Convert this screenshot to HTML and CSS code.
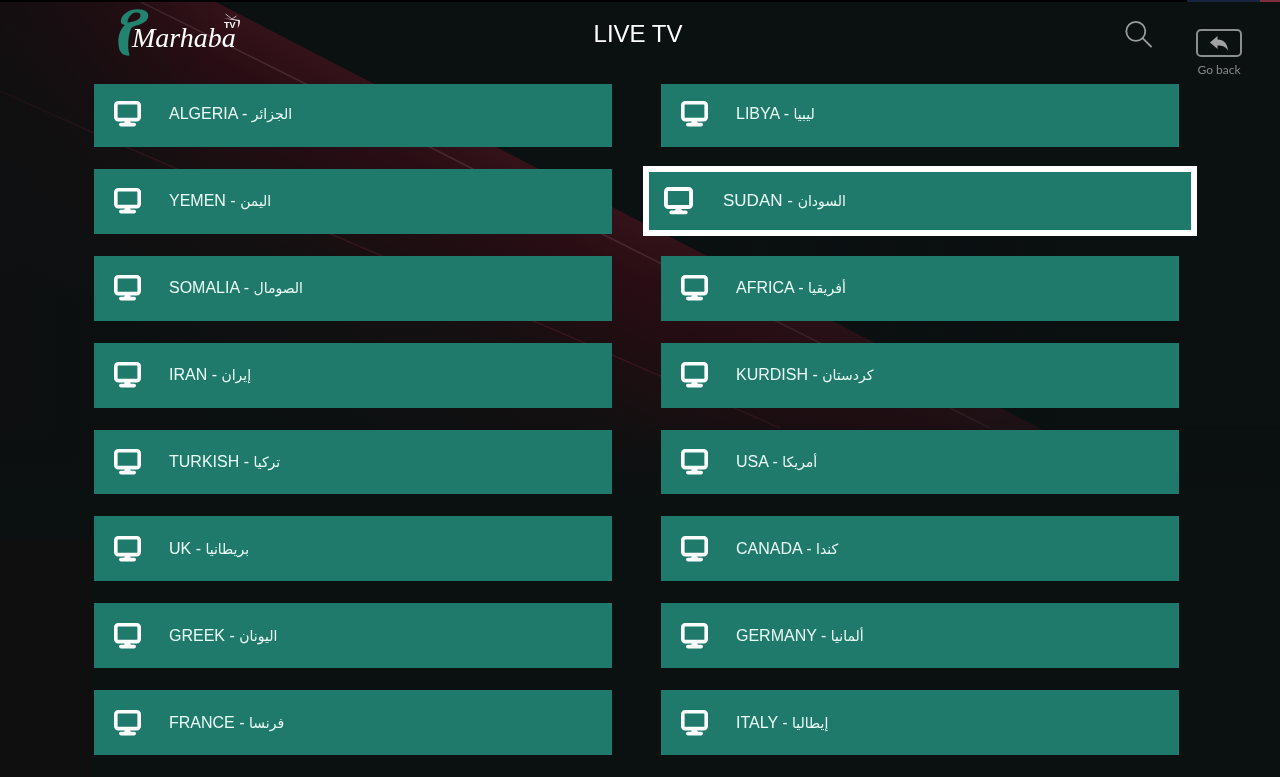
FILE: index.html
```html
<!DOCTYPE html>
<html lang="en">
<head>
    <meta charset="UTF-8">
    <meta name="viewport" content="width=device-width, initial-scale=1.0">
    <title>Marhaba TV - Live TV</title>
    <link rel="stylesheet" href="styles.css">
</head>
<body>

    <!-- Background artwork -->
    <svg class="backdrop" viewBox="0 0 1280 777" preserveAspectRatio="xMinYMin slice" aria-hidden="true">
        <defs>
            <linearGradient id="band" gradientUnits="userSpaceOnUse" x1="440" y1="119" x2="285" y2="419">
                <stop offset="0" stop-color="#341219"/>
                <stop offset="0.15" stop-color="#2a0d14"/>
                <stop offset="0.3" stop-color="#210d12"/>
                <stop offset="0.55" stop-color="#141011"/>
                <stop offset="1" stop-color="#0b1011"/>
            </linearGradient>
            <linearGradient id="fade" gradientUnits="userSpaceOnUse" x1="640" y1="0" x2="1060" y2="0">
                <stop offset="0" stop-color="#0b1011" stop-opacity="0"/>
                <stop offset="1" stop-color="#0b1011" stop-opacity="0.6"/>
            </linearGradient>
            <linearGradient id="fadeLeft" gradientUnits="userSpaceOnUse" x1="0" y1="0" x2="220" y2="0">
                <stop offset="0" stop-color="#0e0f10" stop-opacity="0.7"/>
                <stop offset="1" stop-color="#0e0f10" stop-opacity="0"/>
            </linearGradient>
            <linearGradient id="fadeDown" gradientUnits="userSpaceOnUse" x1="0" y1="420" x2="0" y2="495">
                <stop offset="0" stop-color="#0b1011" stop-opacity="0"/>
                <stop offset="1" stop-color="#0b1011"/>
            </linearGradient>
        </defs>
        <path d="M0 0H212L1080 449V777H0Z" fill="url(#band)"/>
        <path d="M141 2L304 83L471 168L640 253L818 342L990 428" class="ray ray-bright"/>
        <path d="M0 91L94 133L175 168L380 255L580 341L780 428" class="ray"/>
        <path d="M640 200H1280V777H640Z" fill="url(#fade)"/>
        <path d="M0 0H220V777H0Z" fill="url(#fadeLeft)"/>
        <path d="M0 420H1280V777H0Z" fill="url(#fadeDown)"/>
        <path d="M0 540H94V777H0Z" fill="#0f0f10"/>
        <path d="M0 0H1187V2H0Z" fill="#000"/>
        <path d="M1187 0H1260V2H1187Z" fill="#17233f"/>
        <path d="M1260 0H1280V2H1260Z" fill="#7d303b"/>
    </svg>

    <!-- Shared monitor icon -->
    <svg class="sprite" aria-hidden="true">
        <symbol id="monitor" viewBox="0 0 27 26">
            <rect x="1.8" y="1.8" width="23.4" height="16.8" rx="2.4" fill="none" stroke="currentColor" stroke-width="3.6"/>
            <path d="M11 19.500H16L16.500 21.500L18 22.500H9L10.500 21.500Z" fill="currentColor"/>
            <rect x="5" y="21.8" width="17" height="3.6" rx="1.8" fill="currentColor"/>
        </symbol>
    </svg>

    <header class="topbar">
        <a class="logo" href="#">
            <svg class="logo-mark" viewBox="0 0 31 48" aria-hidden="true">
                <path fill-rule="evenodd" fill="#22836f" d="M7 16C3.500 15.500 2.300 13.500 3 11C4 5 12 0 20 0.300C27 0.500 30.500 3 30.300 7C30 12 25 14.500 20 16C15 17.500 13.500 18 12.500 21C10.500 27 9 37 11.500 46.700C5 47 2 43.500 1 39C0 34 0 29 1.500 24.500C3 20.500 4.500 18 7 16ZM9.500 13.600C9.800 9 13 4 18 3.600C21.500 3.400 23 5 22.300 7.500C21.500 11 16 12.800 9.500 13.600Z"/>
            </svg>
            <span class="logo-name">Marhaba</span>
            <span class="logo-tv">TV</span>
            <svg class="logo-antenna" viewBox="0 0 18 16" aria-hidden="true">
                <path d="M1 5.200L16.800 7Q17.500 11.500 14.500 15Q15.600 11.500 15.300 8L1 5.200Z" fill="#fff"/>
                <path d="M9 6L2.500 1M9 6L13.500 3" fill="none" stroke="#ddd" stroke-width="0.8"/>
            </svg>
        </a>
        <h1 class="title">LIVE TV</h1>
        <div class="actions">
            <button class="search-btn" aria-label="Search">
                <svg viewBox="0 0 28 28">
                    <circle cx="10.800" cy="11.300" r="9.500"/>
                    <path d="M17.600 18.200L26 26.500"/>
                </svg>
            </button>
            <button class="back-btn">
                <span class="back-key">
                    <svg viewBox="0 0 18 15">
                        <path d="M0 6.500L7.500 0V3.500C14 3.500 17.500 8 18 14.500C15.500 10.500 12.500 9.500 7.500 9.500V13Z" fill="currentColor"/>
                    </svg>
                </span>
                Go back
            </button>
        </div>
    </header>

    <!-- Channel groups -->
    <main class="list">
        <button class="item"><svg class="icon"><use href="#monitor"/></svg><span>ALGERIA - <span class="ar" lang="ar">الجزائر</span></span></button>
        <button class="item"><svg class="icon"><use href="#monitor"/></svg><span>LIBYA - <span class="ar" lang="ar">ليبيا</span></span></button>
        <button class="item"><svg class="icon"><use href="#monitor"/></svg><span>YEMEN - <span class="ar" lang="ar">اليمن</span></span></button>
        <button class="item selected"><svg class="icon"><use href="#monitor"/></svg><span>SUDAN - <span class="ar" lang="ar">السودان</span></span></button>
        <button class="item"><svg class="icon"><use href="#monitor"/></svg><span>SOMALIA - <span class="ar" lang="ar">الصومال</span></span></button>
        <button class="item"><svg class="icon"><use href="#monitor"/></svg><span>AFRICA - <span class="ar" lang="ar">أفريقيا</span></span></button>
        <button class="item"><svg class="icon"><use href="#monitor"/></svg><span>IRAN - <span class="ar" lang="ar">إيران</span></span></button>
        <button class="item"><svg class="icon"><use href="#monitor"/></svg><span>KURDISH - <span class="ar" lang="ar">كردستان</span></span></button>
        <button class="item"><svg class="icon"><use href="#monitor"/></svg><span>TURKISH - <span class="ar" lang="ar">تركيا</span></span></button>
        <button class="item"><svg class="icon"><use href="#monitor"/></svg><span>USA - <span class="ar" lang="ar">أمريكا</span></span></button>
        <button class="item"><svg class="icon"><use href="#monitor"/></svg><span>UK - <span class="ar" lang="ar">بريطانيا</span></span></button>
        <button class="item"><svg class="icon"><use href="#monitor"/></svg><span>CANADA - <span class="ar" lang="ar">كندا</span></span></button>
        <button class="item"><svg class="icon"><use href="#monitor"/></svg><span>GREEK - <span class="ar" lang="ar">اليونان</span></span></button>
        <button class="item"><svg class="icon"><use href="#monitor"/></svg><span>GERMANY - <span class="ar" lang="ar">ألمانيا</span></span></button>
        <button class="item"><svg class="icon"><use href="#monitor"/></svg><span>FRANCE - <span class="ar" lang="ar">فرنسا</span></span></button>
        <button class="item"><svg class="icon"><use href="#monitor"/></svg><span>ITALY - <span class="ar" lang="ar">إيطاليا</span></span></button>
    </main>

</body>
</html>
```
FILE: styles.css
```css
* {
    margin: 0;
    padding: 0;
    box-sizing: border-box;
}

body {
    font-family: "Liberation Sans", Arial, sans-serif;
    min-height: 100vh;
    display: flex;
    flex-direction: column;
    background: #0b1011;
    color: #fff;
}

button {
    font-family: inherit;
    border: none;
    background: none;
    color: inherit;
    cursor: pointer;
}

/* Background */
.backdrop {
    position: fixed;
    top: 0;
    left: 0;
    width: 100%;
    height: 100%;
    z-index: -1;
}

.ray {
    fill: none;
    stroke: #35161d;
    stroke-width: 1.5;
}

.ray-bright {
    stroke: #482830;
}

.sprite {
    display: none;
}

/* Top bar */
.topbar {
    display: grid;
    grid-template-columns: 1fr auto 1fr;
    align-items: start;
    height: 84px;
    padding: 0 38px 0 118px;
}

.logo {
    position: relative;
    display: flex;
    justify-self: start;
    margin-top: 9px;
    width: 128px;
    height: 48px;
    color: #fff;
    text-decoration: none;
}

.logo-mark {
    width: 31px;
    height: 48px;
}

.logo-name {
    position: absolute;
    left: 14px;
    top: 13px;
    font-family: "Liberation Serif", serif;
    font-style: italic;
    font-size: 28px;
    line-height: 32px;
}

.logo-tv {
    position: absolute;
    left: 106px;
    top: 11px;
    font-size: 9px;
    font-weight: bold;
    line-height: 10px;
}

.logo-antenna {
    position: absolute;
    left: 105px;
    top: 4px;
    width: 18px;
    height: 16px;
}

.title {
    margin-right: 84px;
    margin-top: 20px;
    font-size: 24px;
    font-weight: normal;
    line-height: 28px;
}

.actions {
    display: flex;
    justify-content: flex-end;
    align-items: flex-start;
    gap: 43px;
}

.search-btn {
    margin-top: 20px;
    width: 28px;
    height: 28px;
}

.search-btn svg {
    display: block;
    width: 28px;
    height: 28px;
    fill: none;
    stroke: #999c9c;
    stroke-width: 1.8;
    stroke-linecap: round;
}

.back-btn {
    display: flex;
    flex-direction: column;
    align-items: center;
    gap: 5px;
    margin-top: 29px;
    font-family: Lato, sans-serif;
    font-size: 12px;
    line-height: 16px;
    white-space: nowrap;
    color: #868989;
}

.back-key {
    display: flex;
    justify-content: center;
    align-items: center;
    width: 46px;
    height: 28px;
    border: 2px solid #8b8e8f;
    border-radius: 5px;
    color: #a0a2a3;
}

.back-key svg {
    width: 18px;
    height: 15px;
}

/* Channel list, scrolled slightly under the top bar */
.list {
    flex: 1;
    display: grid;
    grid-template-columns: 1fr 1fr;
    grid-auto-rows: minmax(63px, 1fr);
    gap: 22px 49px;
    margin-top: -2px;
    padding: 0 101px 22px 94px;
    clip-path: inset(2px 0 0 0);
}

.item {
    display: flex;
    align-items: center;
    gap: 28px;
    padding: 0 20px;
    background: #1f7a6c;
    font-size: 16px;
    line-height: 20px;
    text-align: left;
    color: #eafaf6;
}

.icon {
    width: 27px;
    height: 26px;
    flex: none;
    color: #fff;
}

.ar {
    font-family: "DejaVu Sans", sans-serif;
    font-size: 14px;
}

.item.selected {
    margin: -3px -18px -2px;
    padding: 0 15px;
    gap: 30px;
    border: 6px solid #fff;
    font-size: 17px;
}

.selected .icon {
    width: 29px;
    height: 28px;
}
```
